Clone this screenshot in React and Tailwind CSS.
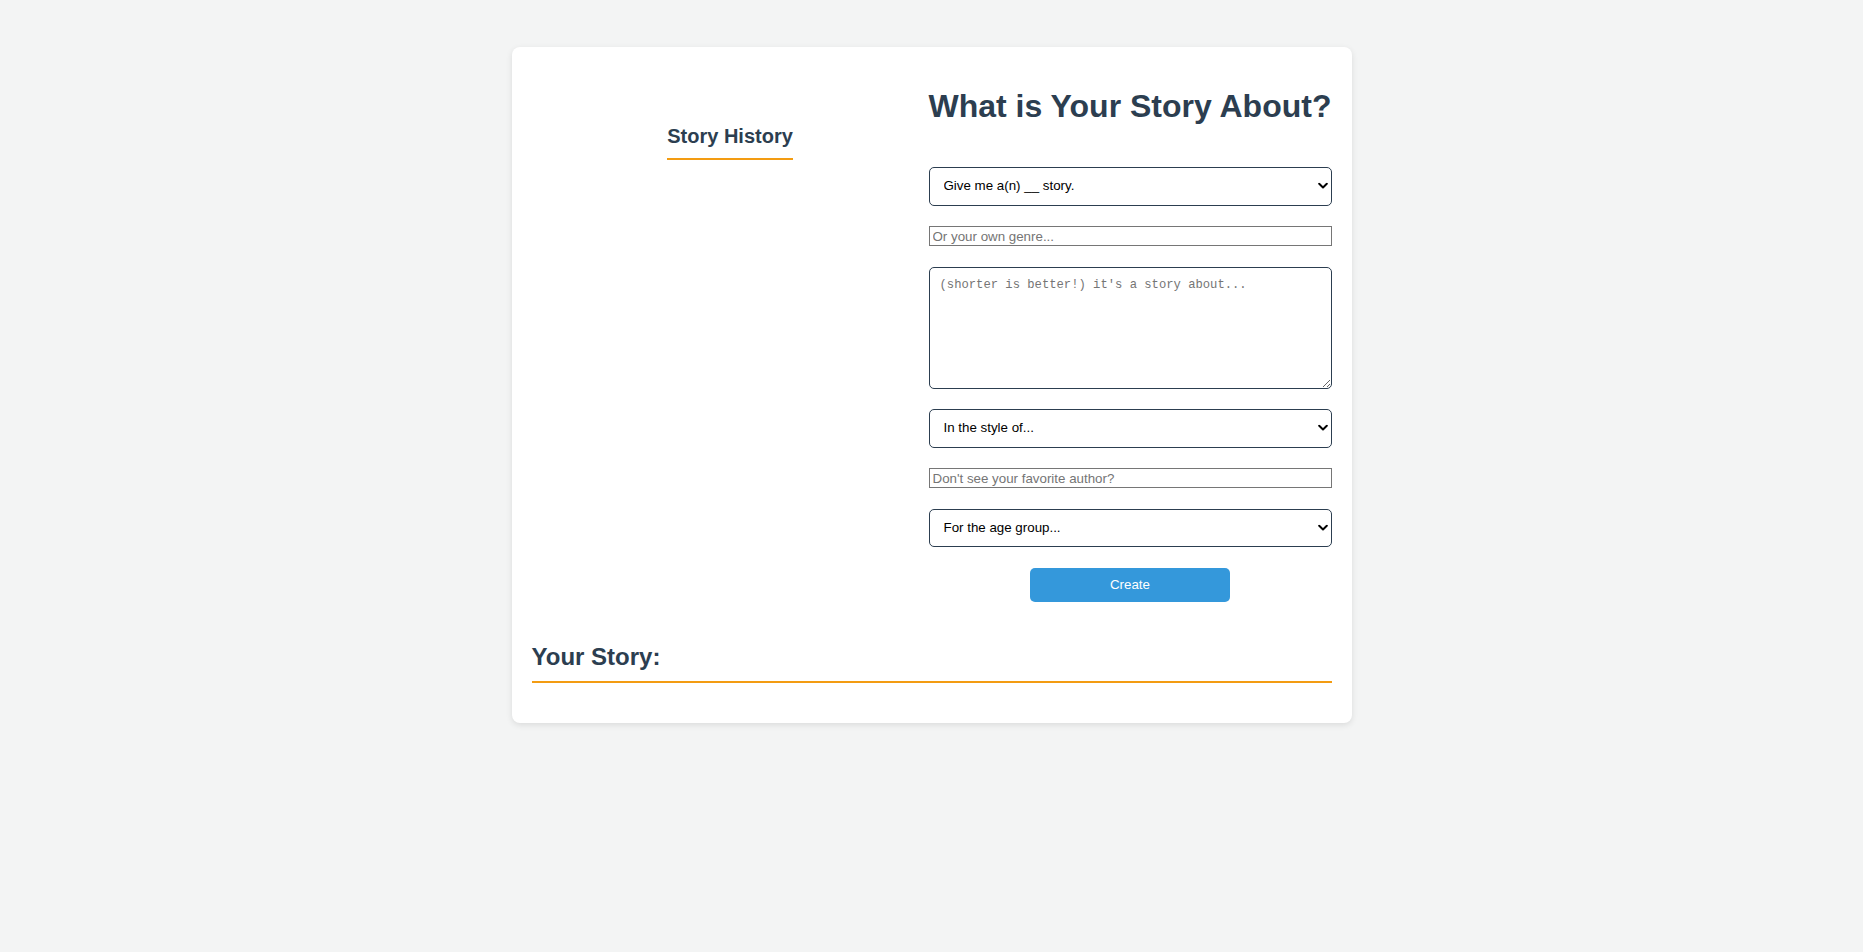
import React, { useState } from "react";

const genres = ["Fantasy", "Mystery", "Adventure", "Science Fiction", "Fairy Tale"];
const authors = ["Dr. Seuss", "Roald Dahl", "J.K. Rowling", "Mark Twain"];
const ages = ["Toddlers", "Kids", "Teens", "Adults"];

function Chevron() {
  return (
    <svg
      className="pointer-events-none absolute right-[4px] top-1/2 -translate-y-1/2"
      width="10"
      height="7"
      viewBox="0 0 10 7"
      fill="none"
    >
      <path d="M1.2 1.3 L5 5 L8.8 1.3" stroke="#000" strokeWidth="2" strokeLinecap="round" strokeLinejoin="round" />
    </svg>
  );
}

function Select({ placeholder, options, value, onChange }) {
  return (
    <div className="relative">
      <select
        value={value}
        onChange={onChange}
        className="block w-full h-[38.5px] appearance-none rounded-[5px] border border-[#2c3e50] bg-white pl-[14px] pr-6 text-[13.33px] text-black outline-none"
      >
        <option value="">{placeholder}</option>
        {options.map((o) => (
          <option key={o} value={o}>
            {o}
          </option>
        ))}
      </select>
      <Chevron />
    </div>
  );
}

export default function App() {
  const [form, setForm] = useState({ genre: "", customGenre: "", about: "", author: "", customAuthor: "", age: "" });
  const set = (key) => (e) => setForm({ ...form, [key]: e.target.value });

  return (
    <div className="min-h-screen bg-[#f3f4f4] pt-[47px] font-['Liberation_Sans',Arial,sans-serif]">
      <div className="mx-auto w-[840px] rounded-[8px] bg-white px-[20px] pt-[20px] pb-[40px] shadow-[0_2px_6px_rgba(0,0,0,0.1)]">
        <div className="flex">
          <div className="w-[397px] pt-[58px] text-center">
            <h2 className="inline-block border-b-2 border-[#f39c12] pb-[10px] text-[20px] leading-[23px] font-bold text-[#2c3e50]">
              Story History
            </h2>
          </div>

          <div className="flex-1">
            <h1 className="mt-[21px] mb-[42px] text-[32px] font-bold leading-[37px] text-[#2c3e50] whitespace-nowrap">
              What is Your Story About?
            </h1>

            <form className="flex flex-col gap-[20.5px]" onSubmit={(e) => e.preventDefault()}>
              <Select placeholder="Give me a(n) __ story." options={genres} value={form.genre} onChange={set("genre")} />
              <input
                type="text"
                value={form.customGenre}
                onChange={set("customGenre")}
                placeholder="Or your own genre..."
                className="block h-[20px] w-full border border-[#767676] px-[3px] text-[13.33px] leading-[16px] text-black placeholder:text-[#757575] outline-none"
              />
              <textarea
                value={form.about}
                onChange={set("about")}
                placeholder="(shorter is better!) it's a story about..."
                className="block h-[122px] w-full rounded-[5px] border border-[#2c3e50] p-[10px] font-['Liberation_Mono',monospace] text-[12.2px] leading-[14px] text-black placeholder:text-[#757575] outline-none"
              />
              <Select placeholder="In the style of..." options={authors} value={form.author} onChange={set("author")} />
              <input
                type="text"
                value={form.customAuthor}
                onChange={set("customAuthor")}
                placeholder="Don't see your favorite author?"
                className="block h-[20px] w-full border border-[#767676] px-[3px] text-[13.33px] leading-[16px] text-black placeholder:text-[#757575] outline-none"
              />
              <Select placeholder="For the age group..." options={ages} value={form.age} onChange={set("age")} />
              <button
                type="submit"
                className="mx-auto block h-[34px] w-[200px] rounded-[5px] bg-[#3498db] text-[13.33px] text-white"
              >
                Create
              </button>
            </form>
          </div>
        </div>

        <div className="mt-[41px]">
          <h2 className="border-b-2 border-[#f39c12] pb-[10px] text-[24px] leading-[28px] font-bold text-[#2c3e50]">Your Story:</h2>
        </div>
      </div>
    </div>
  );
}
